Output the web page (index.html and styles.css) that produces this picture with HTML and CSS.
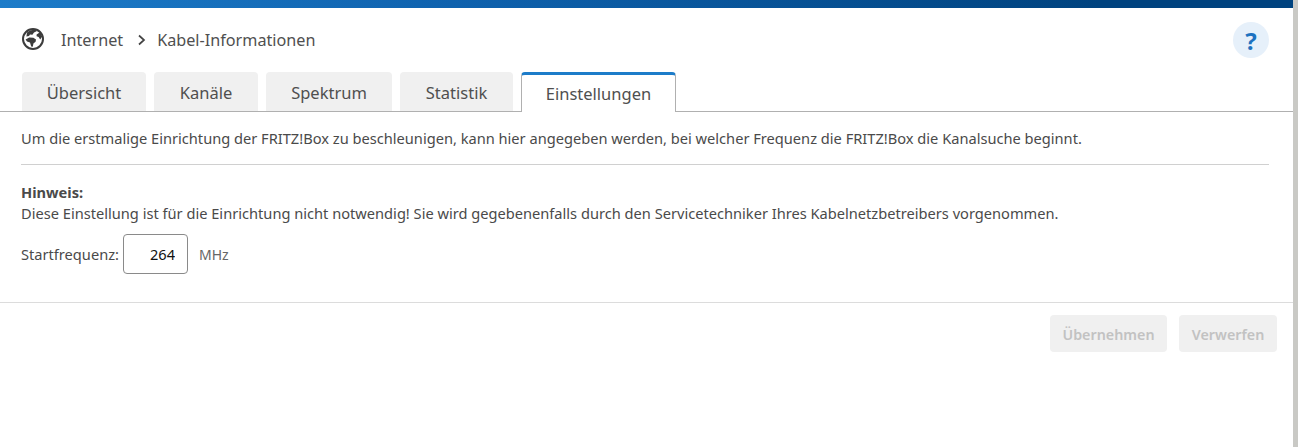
FILE: index.html
```html
<!DOCTYPE html>
<html lang="de">
<head>
<meta charset="utf-8">
<title>Kabel-Informationen</title>
<link rel="stylesheet" href="styles.css">
</head>
<body>
<div class="page">
  <div class="topbar"></div>
  <header class="head">
    <svg class="globe" width="24" height="24" viewBox="0 0 24 24" aria-hidden="true">
      <circle cx="12" cy="12" r="10" fill="none" stroke="#3c3c3c" stroke-width="2"/>
      <path d="M6 5.6l3-2.2 5-1 2 1.6-3 1.6-1.6 2.2-2.4-.2-1 1.4-2.6.4z" fill="#3c3c3c"/>
      <path d="M4.6 12.4l3.6-2 4.2.4 2.6 1.6-.4 2.4-2.2 1.6-.6 3.4-1.6-.2-1.2-4-3-1z" fill="#3c3c3c"/>
      <path d="M15.6 7.6l3.4-2.4 2.2 4.4-2 3-1.6-2.6-2-.8z" fill="#3c3c3c"/>
    </svg>
    <span class="crumb">Internet</span>
    <svg class="chev" width="10" height="12" viewBox="0 0 10 12" aria-hidden="true"><path d="M2 1.5L7 6l-5 4.5" fill="none" stroke="#444" stroke-width="1.7"/></svg>
    <span class="crumb">Kabel-Informationen</span>
    <span class="help">?</span>
  </header>
  <nav class="tabs">
    <a class="tab t1">Übersicht</a>
    <a class="tab t2">Kanäle</a>
    <a class="tab t3">Spektrum</a>
    <a class="tab t4">Statistik</a>
    <a class="tab active">Einstellungen</a>
  </nav>
  <main class="content">
    <p class="intro">Um die erstmalige Einrichtung der FRITZ!Box zu beschleunigen, kann hier angegeben werden, bei welcher Frequenz die FRITZ!Box die Kanalsuche beginnt.</p>
    <hr class="rule">
    <p class="note"><strong>Hinweis:</strong><br>Diese Einstellung ist für die Einrichtung nicht notwendig! Sie wird gegebenenfalls durch den Servicetechniker Ihres Kabelnetzbetreibers vorgenommen.</p>
    <div class="field">
      <label for="freq">Startfrequenz:</label>
      <input id="freq" class="num" value="264">
      <span class="unit">MHz</span>
    </div>
  </main>
  <footer class="actions">
    <button class="btn b1" disabled>Übernehmen</button>
    <button class="btn b2" disabled>Verwerfen</button>
  </footer>
</div>
</body>
</html>
```
FILE: styles.css
```css
* { box-sizing: border-box; }
html, body { margin: 0; height: 100%; background: #c9c9c5; }
body { font-family: "Noto Sans", "Open Sans", sans-serif; color: #4a4a4a; overflow: hidden; }
.page { width: 1293px; height: 447px; background: #fff; }
.topbar { height: 8px; background: linear-gradient(90deg, #1d7cc9 0%, #0f62ae 35%, #00437f 85%, #00437f 100%); }
.head { display: flex; align-items: center; height: 64px; padding: 0 24px 0 21px; }
.globe { margin: 0 16px 2px 0; }
.crumb { font-size: 16.2px; color: #4f4f4f; margin-top: 1px; margin-bottom: 1px; }
.chev { margin: 0 10px 0 14px; }
.help { margin-left: auto; width: 36px; height: 36px; border-radius: 50%; background: #e6f0fa; color: #1d72c0; font-size: 24px; font-weight: 700; display: flex; align-items: center; justify-content: center; }
.tabs { display: flex; gap: 8px; height: 40px; padding-left: 22px; border-bottom: 1px solid #b0b0b0; }
.tab { height: 39px; padding-top: 2px; border-radius: 4px 4px 0 0; background: #f0f0f0; font-size: 16.5px; color: #4f4f4f; display: flex; align-items: center; justify-content: center; }
.t1 { width: 124px; } .t2 { width: 104px; } .t3 { width: 126px; } .t4 { width: 113px; }
.active { width: 155px; height: 40px; padding-top: 0; background: #fff; border: 1px solid #b0b0b0; border-top: 3px solid #1d7cc9; border-bottom: 0; }
.content { padding: 0 24px 0 21px; height: 191px; border-bottom: 1px solid #dcdcdc; font-size: 14.63px; }
.intro { margin: 0; padding-top: 16px; line-height: 20px; height: 52px; }
.rule { margin: 0; border: 0; border-top: 1px solid #d0d0d0; }
.note { margin: 17px 0 0; line-height: 21px; }
.field { display: flex; align-items: center; margin-top: 10px; }
.num { width: 65px; height: 40px; margin-left: 4px; border: 1px solid #8a8a8a; border-radius: 4px; text-align: right; padding: 0 12px; font: 14.6px "Noto Sans", sans-serif; color: #111; }
.unit { margin-left: 11px; font-size: 14px; color: #666; }
.actions { display: flex; justify-content: flex-end; gap: 12px; padding: 12px 16px 0 0; }
.btn { height: 37px; padding-top: 2px; border: 0; border-radius: 4px; background: #f0f0f0; color: #c2c2c2; font: 600 14.3px "Noto Sans", sans-serif; }
.b1 { width: 117px; } .b2 { width: 98px; }
```
